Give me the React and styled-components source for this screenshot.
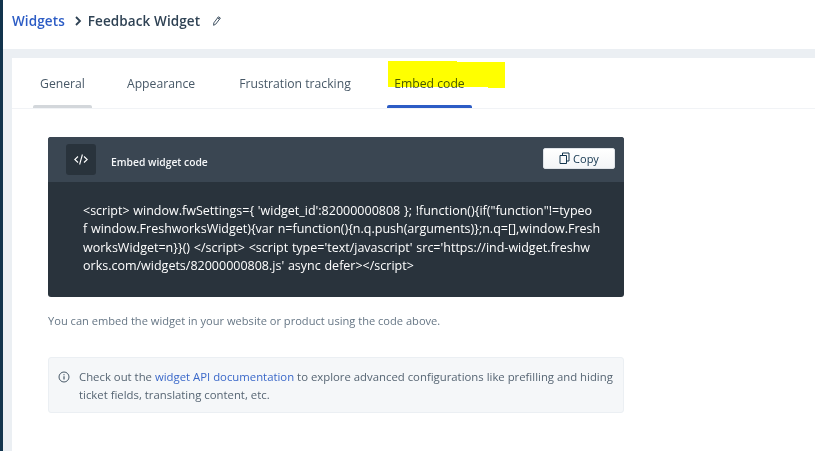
import React from "react";
import styled, { createGlobalStyle } from "styled-components";

const Global = createGlobalStyle`
  html, body { margin: 0; padding: 0; background: #fff; }
  body { font-family: "Open Sans", "Noto Sans", sans-serif; }
  #root { width: 815px; height: 451px; overflow: hidden; }
`;
const Page = styled.div`display: flex; width: 815px; height: 451px; position: relative; overflow: hidden;`;
const Sidebar = styled.div`width: 3px; flex: none; background: #12344d;`;
const Main = styled.div`flex: 1; display: flex; flex-direction: column; min-width: 0;`;
const Header = styled.header`height: 49px; flex: none; background: #fff; display: flex; align-items: center; padding: 0 0 8px 9px; box-sizing: border-box; font-size: 13.5px; font-weight: 600;`;
const Crumb = styled.a`color: #2c5cc5; letter-spacing: .1px;`;
const Current = styled.span`color: #2f4254; letter-spacing: .1px;`;
const Chevron = styled.svg`width: 8px; height: 10px; margin: 1px 6px 0 9px;`;
const Pencil = styled.svg`width: 8px; height: 10px; margin: 0 0 0 13px;`;
const Canvas = styled.div`flex: 1; background: #ebeff3; padding: 9px 0 0 9px; display: flex; min-height: 0;`;
const Panel = styled.main`flex: 1; background: #fff; display: flex; flex-direction: column;`;
const Tabs = styled.nav`height: 51px; flex: none; box-sizing: border-box; display: flex; gap: 27px; padding-left: 21px; border-bottom: 1px solid #f1f3f6;`;
const Tab = styled.div`height: 50px; width: ${p => p.$w}px; display: flex; flex-direction: column;`;
const TabLabel = styled.div`
  flex: 1; display: flex; align-items: center; justify-content: center;
  font-size: 12.2px; color: #475867; padding-top: 3px;
`;
const TabLine = styled.div`height: 3px; border-radius: 2px 2px 0 0; background: ${p => p.$color || "transparent"};`;
const Body = styled.section`padding: 28px 0 0 36px; width: 576px;`;
const Card = styled.div`height: 160px; border-radius: 3px; overflow: hidden; background: #29333c; color: #fff;`;
const CardHead = styled.div`height: 45px; background: #3a4652; display: flex; align-items: center; padding: 0 9px 0 18px;`;
const CodeIcon = styled.div`width: 30px; height: 31px; border-radius: 3px; background: #29333c; display: flex; align-items: center; justify-content: center; margin-right: 15px;`;
const CardTitle = styled.div`font-size: 10.3px; font-weight: 600; flex: 1; color: #f5f7f9; padding-top: 4px;`;
const CopyButton = styled.button`
  width: 72px; height: 21px; box-sizing: border-box; border: 1px solid #dfe3e8; border-radius: 2px;
  background: linear-gradient(#fff, #f3f5f7); color: #12344d; font: 500 11px "Open Sans", sans-serif;
  display: flex; align-items: center; justify-content: center; gap: 3px; padding: 0; margin-top: -3px;
`;
const Code = styled.div`padding: 20px 0 0 35px; font-size: 12.5px; line-height: 18.4px; word-spacing: .5px; color: #fff;`;
const CodeLine = styled.div`white-space: pre;`;
const Note = styled.p`margin: 16px 0 0; font-size: 11.1px; line-height: 16px; color: #667685;`;
const Info = styled.div`
  margin-top: 28px; height: 56px; box-sizing: border-box; background: #f5f7f9; border: 1px solid #ebeff3; border-radius: 3px;
  display: flex; padding: 10px 8px 0 9px; gap: 9px; font-size: 11.35px; line-height: 18px; color: #566573;
`;
const InfoIcon = styled.svg`width: 12px; height: 12px; flex: none; margin-top: 3px;`;
const DocLink = styled.a`color: #3a68c9;`;
const Highlight = styled.svg`position: absolute; left: 388px; top: 60px; width: 118px; height: 28px; mix-blend-mode: multiply;`;

const code = [
  "<script> window.fwSettings={ 'widget_id':82000000808 }; !function(){if(\"function\"!=typeo",
  "f window.FreshworksWidget){var n=function(){n.q.push(arguments)};n.q=[],window.Fresh",
  "worksWidget=n}}() </script> <script type='text/javascript' src='https://ind-widget.freshw",
  "orks.com/widgets/82000000808.js' async defer></script>",
];

const tabs = [
  { label: "General", width: 59, line: "#d3d7db" },
  { label: "Appearance", width: 84 },
  { label: "Frustration tracking", width: 130 },
  { label: "Embed code", width: 85, line: "#2c5cc5" },
];

export default function App() {
  return (
    <Page>
      <Global />
      <Sidebar />
      <Main>
        <Header>
          <Crumb>Widgets</Crumb>
          <Chevron viewBox="0 0 8 10"><path d="M2 1l4 4-4 4" fill="none" stroke="#2f4254" strokeWidth="1.8" /></Chevron>
          <Current>Feedback Widget</Current>
          <Pencil viewBox="0 0 8 10"><path d="M5.4.8l2 1.2-4.6 6.1-2.2 1.2.2-2.4zM4.6 1.9l2 1.3" fill="none" stroke="#2f4254" strokeWidth=".9" /></Pencil>
        </Header>
        <Canvas>
          <Panel>
            <Tabs>
              {tabs.map(t => (
                <Tab key={t.label} $w={t.width}>
                  <TabLabel>{t.label}</TabLabel>
                  <TabLine $color={t.line} />
                </Tab>
              ))}
            </Tabs>
            <Body>
              <Card>
                <CardHead>
                  <CodeIcon>
                    <svg width="14" height="11" viewBox="0 0 14 11" fill="none" stroke="#fff" strokeWidth="1.1"><path d="M4 2.5L.8 5.5 4 8.5M10 2.5l3.2 3-3.2 3M8.4.5l-2.8 10" /></svg>
                  </CodeIcon>
                  <CardTitle>Embed widget code</CardTitle>
                  <CopyButton>
                    <svg width="11" height="12" viewBox="0 0 11 12" fill="none" stroke="#12344d" strokeWidth="1"><path d="M1 3.5h6.5v8H1zM3.5 3.5V1H10v8H7.5" /></svg>
                    Copy
                  </CopyButton>
                </CardHead>
                <Code>
                  {code.map(l => <CodeLine key={l}>{l}</CodeLine>)}
                </Code>
              </Card>
              <Note>You can embed the widget in your website or product using the code above.</Note>
              <Info>
                <InfoIcon viewBox="0 0 12 12"><circle cx="6" cy="6" r="5" fill="none" stroke="#475867" /><path d="M6 5.2v3.2M6 3.2v1" stroke="#475867" strokeWidth="1.2" /></InfoIcon>
                <span>Check out the <DocLink>widget API documentation</DocLink> to explore advanced configurations like prefilling and hiding ticket fields, translating content, etc.</span>
              </Info>
            </Body>
          </Panel>
        </Canvas>
      </Main>
      <Highlight viewBox="0 0 118 28"><path d="M0 1h25V0h0v1h44v1h48v26H100v-1H0z" fill="#ffff00" /></Highlight>
    </Page>
  );
}
